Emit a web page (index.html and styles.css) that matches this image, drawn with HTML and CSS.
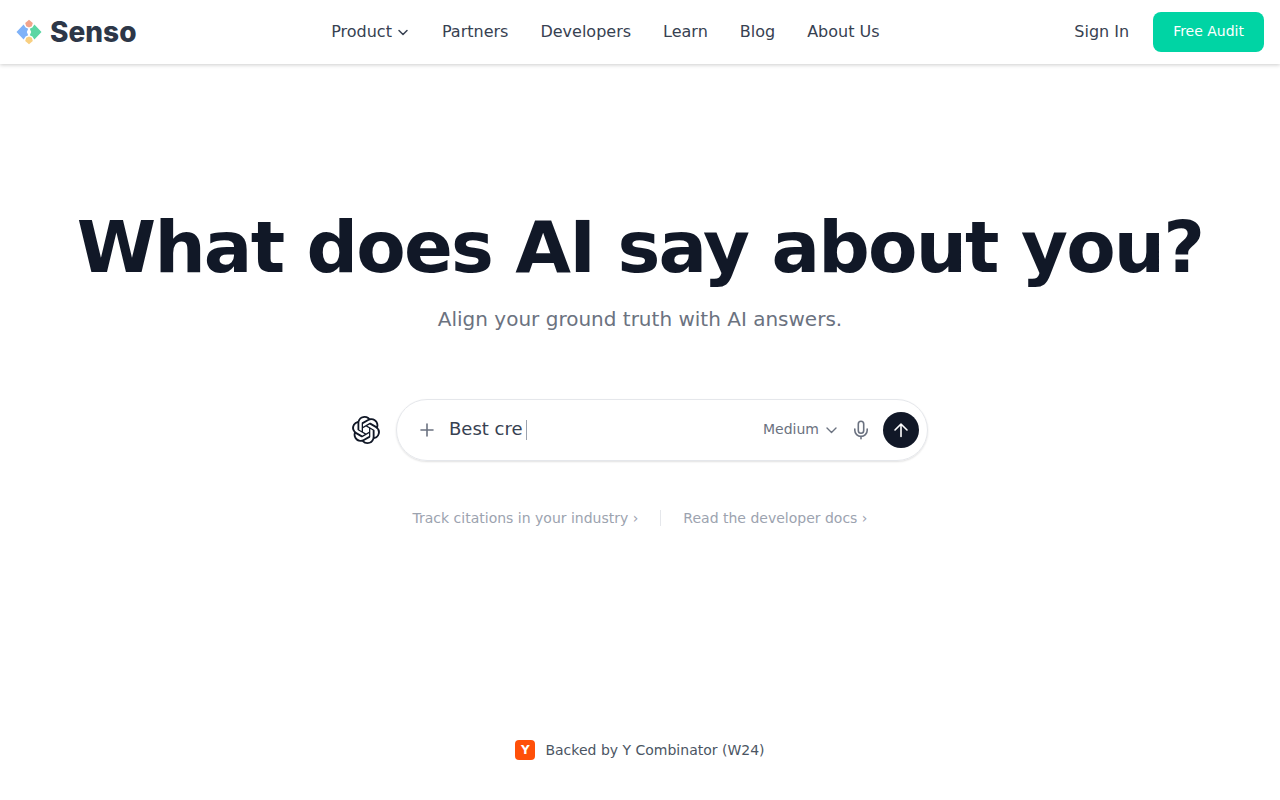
FILE: index.html
```html
<!DOCTYPE html>
<html lang="en">
<head>
  <meta charset="utf-8">
  <meta name="viewport" content="width=device-width, initial-scale=1">
  <title>Senso</title>
  <link rel="stylesheet" href="styles.css">
</head>
<body>
  <header class="header">
    <a class="brand" href="#">
      <svg class="brand-mark" viewBox="0 0 26 26" aria-hidden="true">
        <path fill="#f2a48c" d="M13 .8 16.8 4.1 15.8 7.3 13 8.6 10.2 7.3 9.2 4.1z"/>
        <path fill="#f8cf80" d="M13 25.2 16.8 21.9 15.8 18.7 13 17.4 10.2 18.7 9.2 21.9z"/>
        <path fill="#7fb2f8" d="M.5 13 7.6 5.4 9.6 8.4 12.2 9.8 10.8 13 12.2 16.2 9.6 17.6 7.6 20.6z"/>
        <path fill="#5bd6a3" d="M25.5 13 18.4 5.4 16.4 8.4 13.8 9.8 15.2 13 13.8 16.2 16.4 17.6 18.4 20.6z"/>
      </svg>
      <span class="brand-name">Senso</span>
    </a>
    <nav class="nav" aria-label="Main">
      <button class="nav-link nav-menu" type="button">Product
        <svg class="icon-small" viewBox="0 0 14 14" aria-hidden="true"><path d="m3 5.5 4 4 4-4"/></svg>
      </button>
      <a class="nav-link" href="#">Partners</a>
      <a class="nav-link" href="#">Developers</a>
      <a class="nav-link" href="#">Learn</a>
      <a class="nav-link" href="#">Blog</a>
      <a class="nav-link" href="#">About Us</a>
    </nav>
    <div class="account">
      <a class="nav-link" href="#">Sign In</a>
      <a class="cta" href="#">Free Audit</a>
    </div>
  </header>
  <main class="hero">
    <h1 class="title">What does AI say about you?</h1>
    <p class="subtitle">Align your ground truth with AI answers.</p>
    <form class="ask">
      <svg class="model-logo" viewBox="0 0 24 24" role="img" aria-label="OpenAI"><path d="M22.2819 9.8211a5.9847 5.9847 0 0 0-.5157-4.9108 6.0462 6.0462 0 0 0-6.5098-2.9A6.0651 6.0651 0 0 0 4.9807 4.1818a5.9847 5.9847 0 0 0-3.9977 2.9 6.0462 6.0462 0 0 0 .7427 7.0966 5.98 5.98 0 0 0 .511 4.9107 6.051 6.051 0 0 0 6.5146 2.9001A5.9847 5.9847 0 0 0 13.2599 24a6.0557 6.0557 0 0 0 5.7718-4.2058 5.9894 5.9894 0 0 0 3.9977-2.9001 6.0557 6.0557 0 0 0-.7475-7.0729zm-9.022 12.6081a4.4755 4.4755 0 0 1-2.8764-1.0408l.1419-.0804 4.7783-2.7582a.7948.7948 0 0 0 .3927-.6813v-6.7369l2.02 1.1686a.071.071 0 0 1 .038.052v5.5826a4.504 4.504 0 0 1-4.4945 4.4944zm-9.6607-4.1254a4.4708 4.4708 0 0 1-.5346-3.0137l.142.0852 4.783 2.7582a.7712.7712 0 0 0 .7806 0l5.8428-3.3685v2.3324a.0804.0804 0 0 1-.0332.0615L9.74 19.9502a4.4992 4.4992 0 0 1-6.1408-1.6464zM2.3408 7.8956a4.485 4.485 0 0 1 2.3655-1.9728V11.6a.7664.7664 0 0 0 .3879.6765l5.8144 3.3543-2.0201 1.1685a.0757.0757 0 0 1-.071 0l-4.8303-2.7865A4.504 4.504 0 0 1 2.3408 7.872zm16.5963 3.8558L13.1038 8.364 15.1192 7.2a.0757.0757 0 0 1 .071 0l4.8303 2.7913a4.4944 4.4944 0 0 1-.6765 8.1042v-5.6772a.79.79 0 0 0-.407-.667zm2.0107-3.0231l-.142-.0852-4.7735-2.7818a.7759.7759 0 0 0-.7854 0L9.409 9.2297V6.8974a.0662.0662 0 0 1 .0284-.0615l4.8303-2.7866a4.4992 4.4992 0 0 1 6.6802 4.66zM8.3065 12.863l-2.02-1.1638a.0804.0804 0 0 1-.038-.0567V6.0742a4.4992 4.4992 0 0 1 7.3757-3.4537l-.142.0805L8.704 5.459a.7948.7948 0 0 0-.3927.6813zm1.0976-2.3654l2.602-1.4998 2.6069 1.4998v2.9994l-2.5974 1.4997-2.6067-1.4997Z"/></svg>
      <div class="ask-box">
        <button class="icon-button" type="button" aria-label="Add">
          <svg class="icon-add" viewBox="0 0 20 20" aria-hidden="true"><path d="M10 4v12M4 10h12"/></svg>
        </button>
        <div class="ask-entry">
          <input class="ask-input" type="text" value="Best cre" aria-label="Question">
          <span class="caret"></span>
        </div>
        <div class="effort">
          <select class="effort-select" aria-label="Effort"><option>Medium</option></select>
          <svg class="effort-arrow" viewBox="0 0 16 16" aria-hidden="true"><path d="m4 6 4.5 4.5L13 6"/></svg>
        </div>
        <button class="icon-button" type="button" aria-label="Dictate">
          <svg class="icon-mic" viewBox="0 0 20 20" aria-hidden="true"><rect x="7.3" y="1.2" width="5.4" height="12" rx="2.7"/><path d="M3.8 9v1.2a6.2 6.2 0 0 0 12.4 0V9M10 16.4v2.4"/></svg>
        </button>
        <button class="send" type="submit" aria-label="Send">
          <svg class="icon-send" viewBox="0 0 20 20" aria-hidden="true"><path d="M10 16.5V4M4 10l6-6 6 6"/></svg>
        </button>
      </div>
    </form>
    <div class="links">
      <a class="link" href="#">Track citations in your industry ›</a>
      <span class="divider"></span>
      <a class="link" href="#">Read the developer docs ›</a>
    </div>
    <p class="backed"><span class="yc">Y</span>Backed by Y Combinator (W24)</p>
  </main>
</body>
</html>
```
FILE: styles.css
```css
* {
  box-sizing: border-box;
}

body {
  margin: 0;
  min-height: 100vh;
  display: flex;
  flex-direction: column;
  background: #fff;
  color: #374151;
  font-family: "DejaVu Sans", sans-serif;
  font-size: 16px;
  line-height: 24px;
}

a {
  color: inherit;
  text-decoration: none;
}

button,
input,
select {
  margin: 0;
  padding: 0;
  border: 0;
  background: none;
  color: inherit;
  font: inherit;
}

button {
  cursor: pointer;
}

h1,
p {
  margin: 0;
}

svg {
  display: block;
  flex: none;
  fill: none;
  stroke-linecap: round;
  stroke-linejoin: round;
}

.header {
  display: flex;
  align-items: center;
  justify-content: space-between;
  min-height: 64px;
  padding: 0 16px;
  box-shadow: 0 1px 4px rgb(0 0 0 / 20%);
}

.brand {
  display: flex;
  align-items: center;
  gap: 8px;
}

.brand-mark {
  width: 26px;
  height: 26px;
}

.brand-name {
  color: #2d3748;
  font: 800 28px/36px Inter, sans-serif;
}

.nav {
  display: flex;
  gap: 32px;
}

.nav-menu {
  display: flex;
  align-items: center;
  gap: 4px;
}

.icon-small {
  width: 14px;
  height: 14px;
  stroke: currentColor;
  stroke-width: 1.5;
}

.account {
  display: flex;
  align-items: center;
  gap: 24px;
}

.cta {
  padding: 9px 20px 11px;
  border-radius: 8px;
  background: #00d4a4;
  color: #fff;
  font-size: 14px;
  line-height: 20px;
}

.hero {
  flex: 1;
  display: flex;
  flex-direction: column;
  align-items: center;
  padding: 143px 24px 38px;
}

.title {
  color: #111827;
  font-size: 72px;
  font-weight: 700;
  line-height: 80px;
  letter-spacing: -0.025em;
  text-align: center;
}

.subtitle {
  margin-top: 16px;
  color: #6b7280;
  font-size: 20px;
  line-height: 32px;
}

.ask {
  display: flex;
  align-items: center;
  gap: 16px;
  width: 100%;
  max-width: 576px;
  margin-top: 64px;
}

.model-logo {
  width: 28px;
  height: 28px;
  fill: #111827;
}

.ask-box {
  flex: 1;
  display: flex;
  align-items: center;
  gap: 12px;
  padding: 12px 8px 12px 20px;
  border: 1px solid #e5e7eb;
  border-radius: 32px;
  box-shadow: 0 1px 2px rgb(0 0 0 / 12%);
}

.icon-button {
  color: #6b7280;
}

.icon-add,
.icon-mic,
.icon-send {
  width: 20px;
  height: 20px;
  stroke: currentColor;
  stroke-width: 1.6;
}

.ask-entry {
  flex: 1;
  display: flex;
  align-items: center;
  gap: 3px;
}

.ask-input {
  field-sizing: content;
  padding-bottom: 2px;
  outline: 0;
  font-size: 18px;
  line-height: 28px;
}

.caret {
  width: 1px;
  height: 20px;
  background: #9ca3af;
}

.effort {
  display: flex;
  align-items: center;
  gap: 4px;
  color: #6b7280;
}

.effort-select {
  appearance: none;
  field-sizing: content;
  padding-bottom: 2px;
  font-size: 14px;
  line-height: 20px;
}

.effort-arrow {
  width: 16px;
  height: 16px;
  stroke: currentColor;
  stroke-width: 1.4;
}

.send {
  display: grid;
  place-items: center;
  width: 36px;
  height: 36px;
  border-radius: 50%;
  background: #111827;
  color: #fff;
}

.links {
  display: flex;
  align-items: center;
  gap: 22px;
  margin-top: 45px;
  color: #9ca3af;
  font-size: 14px;
}

.divider {
  width: 1px;
  height: 16px;
  background: #e5e7eb;
}

.backed {
  display: flex;
  align-items: center;
  gap: 10px;
  margin-top: auto;
  color: #4b5563;
  font-size: 14px;
}

.yc {
  width: 20px;
  border-radius: 4px;
  background: #ff5008;
  color: #fff;
  font-size: 12px;
  font-weight: 700;
  line-height: 20px;
  text-align: center;
}
```
